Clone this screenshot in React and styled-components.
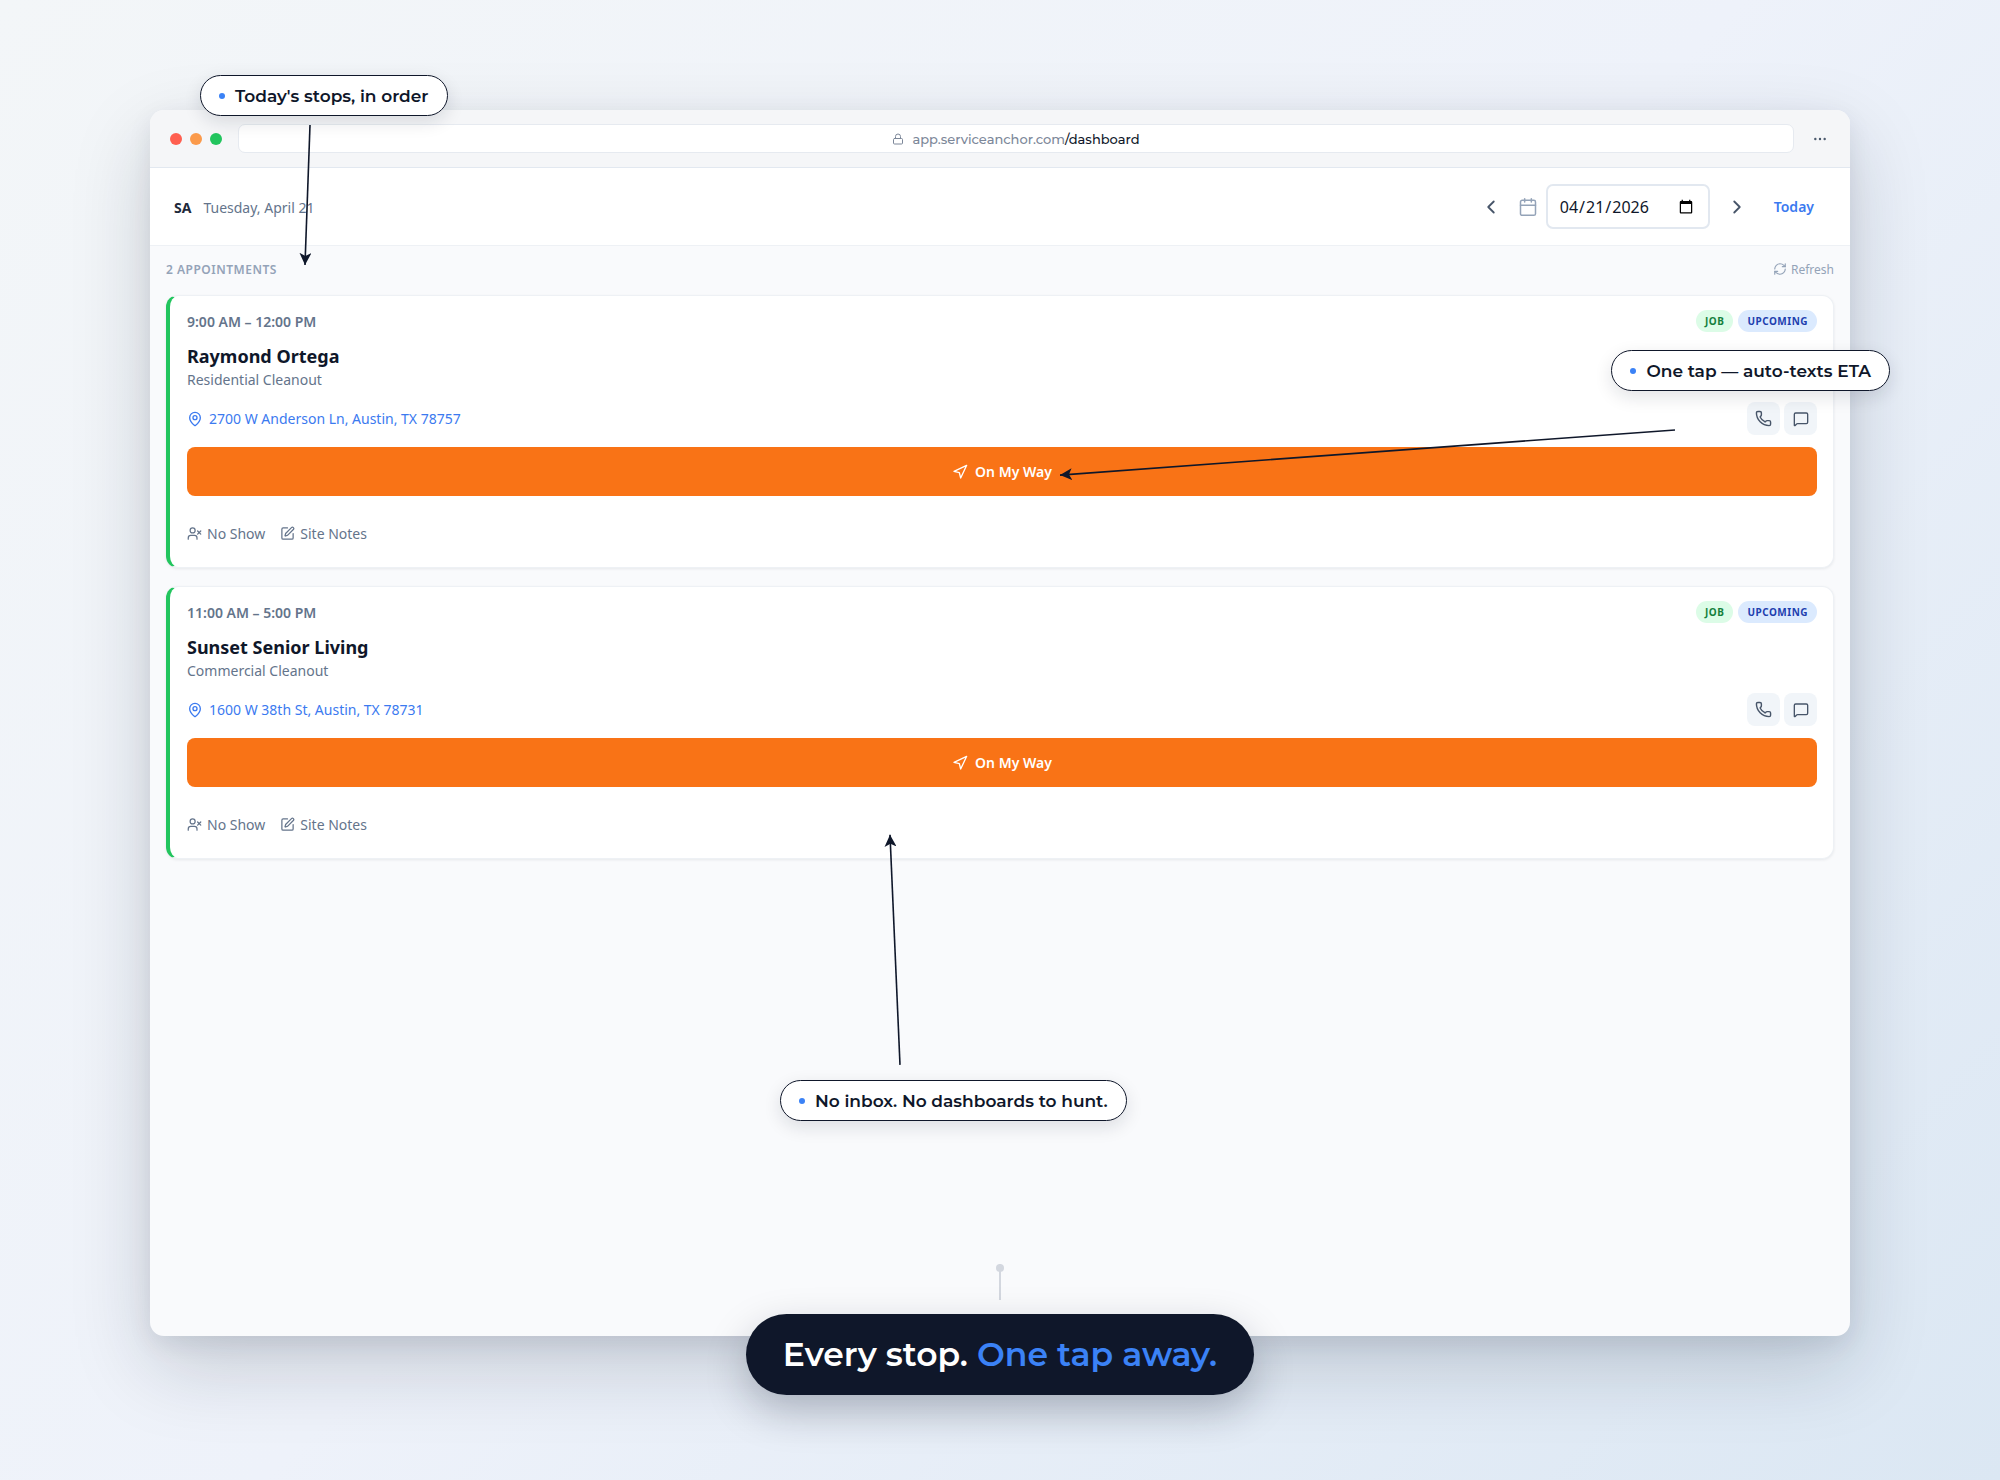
import React, { useState } from 'react'
import styled, { createGlobalStyle } from 'styled-components'
import {
  Calendar, ChevronLeft, ChevronRight, Ellipsis, Lock, MapPin, MessageSquare,
  Navigation, Phone, RefreshCw, SquarePen, UserX
} from 'lucide-react'

const appointments = [
  {
    id: 1,
    time: '9:00 AM – 12:00 PM',
    name: 'Raymond Ortega',
    type: 'Residential Cleanout',
    address: '2700 W Anderson Ln, Austin, TX 78757',
  },
  {
    id: 2,
    time: '11:00 AM – 5:00 PM',
    name: 'Sunset Senior Living',
    type: 'Commercial Cleanout',
    address: '1600 W 38th St, Austin, TX 78731',
  },
]

// start and end of each pointer, in percent of the stage
const arrows = [
  { id: 'stops', x1: '15.5%', y1: '8.45%', x2: '15.25%', y2: '17.9%' },
  { id: 'eta', x1: '83.75%', y1: '29.05%', x2: '53%', y2: '32.1%' },
  { id: 'inbox', x1: '45%', y1: '71.95%', x2: '44.5%', y2: '56.4%' },
]

function Appointment({ appointment }) {
  const { time, name, type, address } = appointment;
  return (
    <Card>
      <CardTop>
        <Time>{time}</Time>
        <Badges>
          <Badge $bg="#dcfce7" $color="#15803d">JOB</Badge>
          <Badge $bg="#dbeafe" $color="#1e40af">UPCOMING</Badge>
        </Badges>
      </CardTop>
      <Name>{name}</Name>
      <JobType>{type}</JobType>
      <ContactRow>
        <Address href="#map"><MapPin size={16} />{address}</Address>
        <ContactButtons>
          <IconButton aria-label={`Call ${name}`}><Phone size={17} /></IconButton>
          <IconButton aria-label={`Message ${name}`}><MessageSquare size={16} /></IconButton>
        </ContactButtons>
      </ContactRow>
      <PrimaryButton><Navigation size={16} />On My Way</PrimaryButton>
      <CardLinks>
        <TextButton><UserX size={15} />No Show</TextButton>
        <TextButton><SquarePen size={15} />Site Notes</TextButton>
      </CardLinks>
    </Card>
  )
}

function App() {

  const [date, setDate] = useState('2026-04-21');

  return (
    <Stage>
      <GlobalStyle />
      <BrowserWindow>
        <TitleBar>
          <Lights>
            <Light $color="#ff5f50" />
            <Light $color="#fb9a4b" />
            <Light $color="#22c55e" />
          </Lights>
          <AddressBar>
            <Lock size={12} />
            <span>app.serviceanchor.com<b>/dashboard</b></span>
          </AddressBar>
          <MenuButton aria-label="Menu"><Ellipsis size={16} strokeWidth={1.6} /></MenuButton>
        </TitleBar>

        <Header>
          <Brand>
            <strong>SA</strong>
            <span>Tuesday, April 21</span>
          </Brand>
          <DateNav>
            <NavButton aria-label="Previous day"><ChevronLeft size={22} /></NavButton>
            <DateLabel>
              <Calendar size={20} strokeWidth={1.8} />
              <DateInput
                type="date"
                aria-label="Date"
                value={date}
                onChange={(e) => setDate(e.target.value)}
              />
            </DateLabel>
            <NavButton aria-label="Next day"><ChevronRight size={22} /></NavButton>
            <TodayButton>Today</TodayButton>
          </DateNav>
        </Header>

        <Content>
          <ListHeader>
            <Count>2 APPOINTMENTS</Count>
            <RefreshButton><RefreshCw size={14} />Refresh</RefreshButton>
          </ListHeader>
          <List>
            {appointments.map((appointment) => (
              <Appointment key={appointment.id} appointment={appointment} />
            ))}
          </List>
        </Content>

        <CaptionWrap>
          <Pin />
          <Caption>Every stop. <em>One tap away.</em></Caption>
        </CaptionWrap>
      </BrowserWindow>

      <Arrows aria-hidden="true">
        <defs>
          <marker id="head" viewBox="0 0 12 12" refX="12" refY="6" markerWidth="12" markerHeight="12"
            markerUnits="userSpaceOnUse" orient="auto">
            <path d="M0 0 L12 6 L0 12 L3 6 Z" fill="#0f172a" />
          </marker>
        </defs>
        {arrows.map(({ id, ...points }) => (
          <line key={id} {...points} stroke="#0f172a" strokeWidth="1.6" markerEnd="url(#head)" />
        ))}
      </Arrows>

      <Callout $top="75px" $left="10%">Today's stops, in order</Callout>
      <Callout $top="350px" $right="5.5%">One tap — auto-texts ETA</Callout>
      <Callout $top="1080px" $left="39%">No inbox. No dashboards to hunt.</Callout>
    </Stage>
  )
}

const GlobalStyle = createGlobalStyle`
  * {
    box-sizing: border-box;
  }

  body {
    margin: 0;
    color: #0f172a;
    font-family: 'Segoe UI', 'Noto Sans', sans-serif;
  }

  button, input {
    font-family: inherit;
  }

  button {
    padding: 0;
    border: 0;
    background: transparent;
    cursor: pointer;
  }

  svg {
    flex-shrink: 0;
  }
`

const Stage = styled.main`
  position: relative;
  min-height: 100vh;
  padding: 110px 0 144px;
  display: flex;
  flex-direction: column;
  background: linear-gradient(135deg, #f3f6f8 0%, #eef2fa 50%, #dbe7f3 100%);
`

const BrowserWindow = styled.section`
  position: relative;
  width: 85%;
  margin: 0 auto;
  flex: 1;
  display: flex;
  flex-direction: column;
  background: #f9fafc;
  border-radius: 14px;
  box-shadow: 0 30px 80px rgba(15, 30, 45, 0.18), 0 8px 24px rgba(15, 30, 45, 0.08);
`

const TitleBar = styled.div`
  display: flex;
  align-items: center;
  height: 58px;
  padding: 0 20px;
  background: #f5f6f8;
  border-bottom: 1px solid #e2e8f0;
  border-radius: 14px 14px 0 0;
`

const Lights = styled.div`
  display: flex;
  gap: 8px;
  margin-right: 16px;
`

const Light = styled.span`
  width: 12px;
  height: 12px;
  border-radius: 50%;
  background: ${({ $color }) => $color};
`

const AddressBar = styled.div`
  flex: 1;
  display: flex;
  align-items: center;
  justify-content: center;
  gap: 8px;
  height: 29px;
  background: #fff;
  border: 1px solid #e6eaf0;
  border-radius: 7px;
  color: #7c8799;
  font-family: Montserrat, Inter, sans-serif;
  font-size: 13px;
  font-weight: 500;

  b {
    color: #0f172a;
    font-weight: 500;
  }
`

const MenuButton = styled.button`
  display: flex;
  margin-left: 18px;
  margin-right: 2px;
  color: #475569;
`

const Header = styled.header`
  display: flex;
  align-items: center;
  justify-content: space-between;
  height: 78px;
  padding: 0 24px;
  background: #fff;
  border-bottom: 1px solid #eef1f5;
`

const Brand = styled.div`
  display: flex;
  align-items: center;
  gap: 12px;
  padding-top: 2px;
  font-size: 14px;
  color: #64748b;

  strong {
    color: #1e293b;
  }
`

const DateNav = styled.div`
  display: flex;
  align-items: center;
`

const NavButton = styled.button`
  display: flex;
  align-items: center;
  justify-content: center;
  width: 36px;
  height: 36px;
  margin: 0 9px;
  color: #475569;
`

const DateLabel = styled.label`
  display: flex;
  align-items: center;
  gap: 8px;
  color: #94a3b8;
`

const DateInput = styled.input`
  width: 164px;
  height: 45px;
  padding: 0 12px 0 11px;
  border: 2px solid #e2e8f0;
  border-radius: 7px;
  background: #fff;
  color: #0f172a;
  font-size: 16px;
`

const TodayButton = styled.button`
  padding: 8px 12px 8px 10px;
  color: #3b7af0;
  font-size: 14px;
  font-weight: 600;
`

const Content = styled.div`
  padding: 13px 16px;
`

const ListHeader = styled.div`
  display: flex;
  align-items: center;
  justify-content: space-between;
  height: 20px;
  margin-bottom: 16px;
  color: #94a3b8;
`

const Count = styled.h2`
  margin: 0;
  font-size: 12px;
  font-weight: 600;
  letter-spacing: 0.5px;
`

const RefreshButton = styled.button`
  display: flex;
  align-items: center;
  gap: 4px;
  color: #94a3b8;
  font-size: 12px;
`

const List = styled.div`
  display: flex;
  flex-direction: column;
  gap: 18px;
`

const Card = styled.article`
  padding: 14px 16px 24px 17px;
  background: #fff;
  border: 1px solid #eef1f5;
  border-left: 4px solid #22c55e;
  border-radius: 12px;
  box-shadow: 0 1px 3px rgba(15, 23, 42, 0.08);
`

const CardTop = styled.div`
  display: flex;
  align-items: center;
  justify-content: space-between;
`

const Time = styled.span`
  color: #64748b;
  font-size: 14px;
  font-weight: 600;
`

const Badges = styled.div`
  display: flex;
  gap: 5px;
`

const Badge = styled.span`
  height: 22px;
  padding: 0 9px;
  border-radius: 11px;
  background: ${({ $bg }) => $bg};
  color: ${({ $color }) => $color};
  font-size: 10px;
  font-weight: 700;
  line-height: 22px;
  letter-spacing: 0.5px;
`

const Name = styled.h3`
  margin: 12px 0 0;
  font-size: 18px;
  font-weight: 700;
  line-height: 24px;
`

const JobType = styled.p`
  margin: 2px 0 0;
  color: #64748b;
  font-size: 14px;
  line-height: 20px;
`

const ContactRow = styled.div`
  display: flex;
  align-items: center;
  justify-content: space-between;
  margin: 12px 0;
`

const Address = styled.a`
  display: flex;
  align-items: center;
  gap: 6px;
  color: #3b7af0;
  font-size: 14px;
  text-decoration: none;
`

const ContactButtons = styled.div`
  display: flex;
  gap: 4px;
`

const IconButton = styled.button`
  display: flex;
  align-items: center;
  justify-content: center;
  width: 33px;
  height: 33px;
  border-radius: 8px;
  background: #f1f5f9;
  color: #475569;
`

const PrimaryButton = styled.button`
  display: flex;
  align-items: center;
  justify-content: center;
  gap: 7px;
  width: 100%;
  height: 49px;
  border-radius: 8px;
  background: #f97316;
  color: #fff;
  font-size: 14px;
  font-weight: 600;
`

const CardLinks = styled.div`
  display: flex;
  gap: 15px;
  height: 20px;
  margin-top: 27px;
`

const TextButton = styled.button`
  display: flex;
  align-items: center;
  gap: 5px;
  color: #64748b;
  font-size: 14px;
`

const CaptionWrap = styled.div`
  position: absolute;
  left: 0;
  right: 0;
  bottom: -59px;
  display: flex;
  flex-direction: column;
  align-items: center;
`

const Pin = styled.span`
  width: 2px;
  height: 36px;
  margin-bottom: 14px;
  background: #d3d7df;

  &::before {
    content: '';
    display: block;
    width: 8px;
    height: 8px;
    margin: 0 -3px;
    border-radius: 50%;
    background: #d3d7df;
  }
`

const Caption = styled.p`
  margin: 0;
  padding: 0 37px;
  border-radius: 41px;
  background: #0f172a;
  box-shadow: 0 16px 40px rgba(15, 23, 42, 0.25);
  color: #fff;
  font-family: Montserrat, Inter, sans-serif;
  font-size: 33px;
  font-weight: 600;
  line-height: 81px;
  white-space: nowrap;

  em {
    color: #3b82f6;
    font-style: normal;
  }
`

const Arrows = styled.svg`
  position: absolute;
  inset: 0;
  width: 100%;
  height: 100%;
  pointer-events: none;
`

const Callout = styled.div`
  position: absolute;
  top: ${({ $top }) => $top};
  left: ${({ $left }) => $left || 'auto'};
  right: ${({ $right }) => $right || 'auto'};
  display: flex;
  align-items: center;
  gap: 10px;
  height: 41px;
  padding: 0 18px;
  border: 1px solid #0f172a;
  border-radius: 21px;
  background: #fff;
  box-shadow: 0 6px 18px rgba(15, 23, 42, 0.12);
  font-family: Montserrat, Inter, sans-serif;
  font-size: 17px;
  font-weight: 600;
  white-space: nowrap;

  &::before {
    content: '';
    width: 6px;
    height: 6px;
    border-radius: 50%;
    background: #3b82f6;
  }
`

export default App
